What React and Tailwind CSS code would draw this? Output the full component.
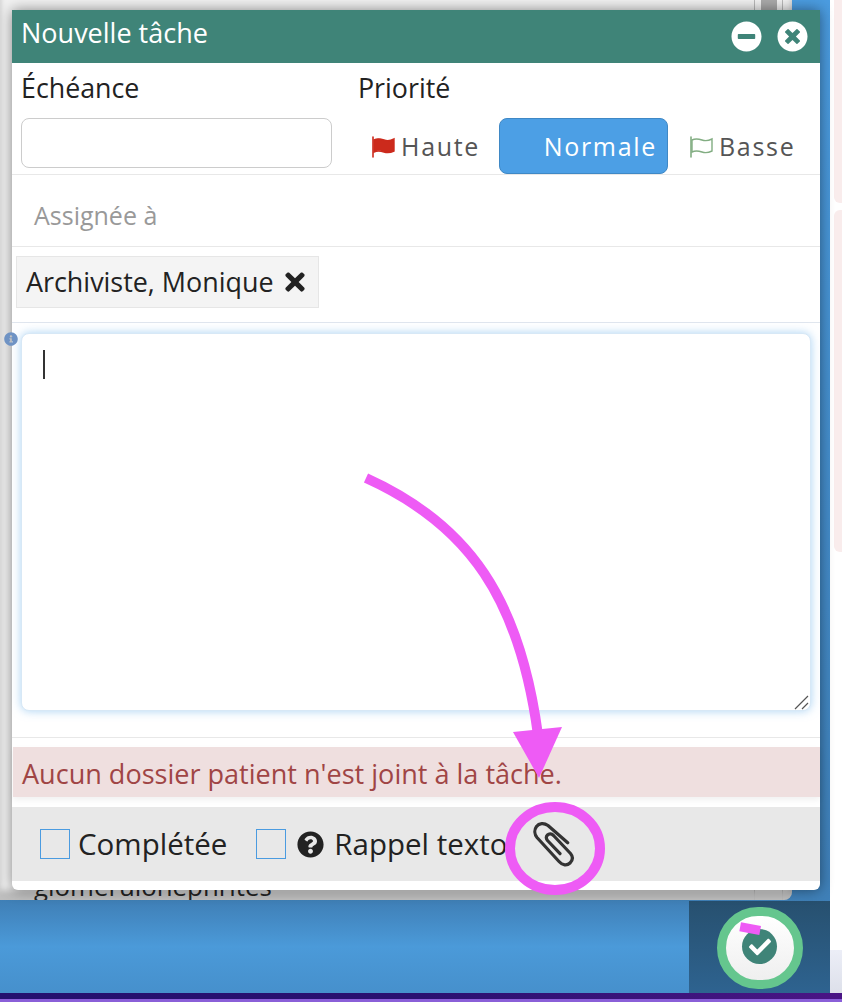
import { FaMinusCircle, FaTimesCircle, FaTimes, FaQuestionCircle, FaInfoCircle, FaCheck } from 'react-icons/fa';

function Flag({ pole, fill, stroke }) {
  return (
    <svg width="26" height="22" viewBox="0 0 26 22" className="shrink-0">
      <path d="M2 1v20" stroke={pole} strokeWidth="1.6" strokeLinecap="round" />
      <path
        d="M3 4c4-2 7-1 10 0s6 1 10-1v12c-4 2-7 2-10 1s-6-2-10 0z"
        fill={fill}
        stroke={stroke}
        strokeWidth="1.4"
      />
    </svg>
  );
}

function Paperclip() {
  return (
    <svg width="44" height="48" viewBox="533 823 44 48" fill="none" className="shrink-0">
      <path
        d="M568.7 845.7 L549 828.5 C545 825.5 540 826 537.5 829.5 C535 833 535.5 837.5 538 840.5 L560 864.5 C563.5 868.5 568 869 571 866 C574 863 574 859.5 571.5 856.5 L554.5 838.5 C552.5 836.5 550 836.5 548.5 838 C547 839.5 547 841.5 548.5 843.5 L561 856.7"
        stroke="#333"
        strokeWidth="3.2"
        strokeLinecap="round"
        strokeLinejoin="round"
      />
    </svg>
  );
}

function Checkbox() {
  return <span className="block w-[30px] h-[30px] border border-[#4a9be0] bg-[#e8e8e8] shrink-0" />;
}

export default function App() {
  return (
    <div className="relative w-[842px] h-[1002px] overflow-hidden bg-white font-['Open_Sans',sans-serif] text-[#222]">
      <div className="flex h-[993px]">
        <div className="w-[830px] flex flex-col">
          {/* page behind the dialog */}
          <div className="h-[900px] flex bg-gradient-to-b from-[#4b9ce0] to-[#3f80b8] overflow-hidden">
            <div className="w-[792px] flex rounded-br-lg bg-[#f2f2f2] shadow-[inset_0_-10px_6px_rgba(0,0,0,0.22)] overflow-hidden">
              <div className="flex-1 flex flex-col justify-end pl-[34px] overflow-hidden">
                <div className="text-[25.8px] leading-[34px] text-[#222] -mb-[3px]">glomérulonéphrites</div>
              </div>
              <div className="w-[29px] border-x border-[#b9b9b9] flex justify-center">
                <div className="w-[16px] h-[10px] bg-[#aaaaaa]" />
              </div>
              <div className="w-[9px]" />
            </div>
          </div>
          <div className="flex-1 flex bg-gradient-to-b from-[#3f7fb6] via-[#4b9ad9] to-[#4690cc]">
            <div className="flex-1" />
            <div className="w-[141px] mt-[1px] flex items-center justify-center bg-gradient-to-b from-[#27506f] to-[#2e6390]">
              <div className="w-[86px] h-[82px] mt-[2px] rounded-full border-[9px] border-[#65c68e] bg-gradient-to-b from-white to-[#efefef] flex items-center justify-center">
                <div className="w-[35px] h-[35px] -mt-[3px] rounded-full bg-[#3f8478] flex items-center justify-center">
                  <FaCheck className="text-white text-[22px]" />
                </div>
              </div>
            </div>
          </div>
        </div>
        <div className="flex-1 flex flex-col pl-[4px] gap-[7px]">
          <div className="h-[203px] bg-[#f9ecec] rounded-bl-md" />
          <div className="h-[342px] bg-[#f9ecec] rounded-l-md" />
          <div className="flex-1" />
          <div className="h-[43px] -ml-[4px] bg-gradient-to-b from-[#eceef7] to-[#dde0ea]" />
        </div>
      </div>
      <div className="h-[6px] bg-gradient-to-r from-[#24106e] via-[#2a1070] to-[#4a1585]" />
      <div className="h-[3px] bg-[#8a5fd8]" />

      {/* dialog */}
      <div className="absolute left-[12px] top-[10px] w-[808px] h-[880px] bg-white rounded-b-md shadow-[0_0_14px_rgba(0,0,0,0.45)] flex flex-col">
        <div className="h-[53px] shrink-0 bg-[#3f8478] flex items-center justify-between pl-[9px] pr-[12px] text-white">
          <span className="text-[27px] leading-none -mt-[9px]">Nouvelle tâche</span>
          <div className="flex gap-[15px]">
            <FaMinusCircle className="text-[31px]" />
            <FaTimesCircle className="text-[31px]" />
          </div>
        </div>

        <div className="h-[112px] shrink-0 border-b border-[#e8e8e8] flex pl-[9px]">
          <div className="w-[337px] shrink-0">
            <div className="text-[26.8px] leading-[34px] mt-[8px]">Échéance</div>
            <input className="block mt-[13px] w-[311px] h-[50px] rounded-lg border border-[#cccccc] bg-white" />
          </div>
          <div className="flex-1">
            <div className="text-[26.8px] leading-[34px] mt-[8px]">Priorité</div>
            <div className="flex items-stretch mt-[13px] h-[56px] text-[25px] tracking-[1.7px] text-[#555]">
              <div className="flex items-center pl-[13px] pt-[2px] w-[141px]">
                <Flag pole="#cc2a1c" fill="#cc2a1c" stroke="#cc2a1c" />
                <span className="ml-[4px]">Haute</span>
              </div>
              <div className="w-[169px] rounded-lg bg-[#4c9fe5] border border-[#3f88c5] text-white flex items-center justify-end pr-[10px] pt-[2px]">
                Normale
              </div>
              <div className="flex items-center pl-[21px] pt-[2px]">
                <Flag pole="#82ad82" fill="transparent" stroke="#82ad82" />
                <span className="ml-[4px]">Basse</span>
              </div>
            </div>
          </div>
        </div>

        <div className="h-[72px] shrink-0 border-b border-[#e8e8e8] flex items-center pl-[22px] pt-[10px] text-[25px] text-[#999]">
          Assignée à
        </div>

        <div className="h-[76px] shrink-0 border-b border-[#e0e6ee] pl-[4px] pt-[9px]">
          <div className="inline-flex items-center h-[52px] w-[303px] bg-[#f4f4f4] border border-[#e6e6e6] pl-[9px] text-[26.9px]">
            <span>Archiviste, Monique</span>
            <FaTimes className="ml-[7px] text-[28px] text-[#222]" />
          </div>
        </div>

        <div className="relative h-[415px] shrink-0 border-b border-[#e8e8e8] pl-[9px] pr-[9px] pt-[10px]">
          <textarea className="block w-full h-[378px] rounded-lg border border-[#d7e8f6] bg-white outline-none shadow-[0_0_10px_rgba(102,175,233,0.55)] resize-none" />
          <span className="absolute left-[31px] top-[27px] w-[2px] h-[29px] bg-[#333]" />
          <FaInfoCircle className="absolute -left-[8px] top-[9px] text-[14px] text-[#6f93c4]" />
          <svg className="absolute right-[10px] top-[372px]" width="16" height="15" viewBox="0 0 16 15" fill="none">
            <path d="M1 14 L14 1 M8 14 L14 8" stroke="#555" strokeWidth="1.2" />
          </svg>
        </div>

        <div className="mt-[9px] ml-[1px] h-[50px] shrink-0 bg-[#efdfdf] flex items-center pl-[9px] pt-[5px] text-[27.05px] text-[#a04545] shadow-[0_3px_6px_rgba(0,0,0,0.06)]">
          Aucun dossier patient n'est joint à la tâche.
        </div>

        <div className="mt-[10px] h-[74px] shrink-0 bg-[#e8e8e8] flex items-center pl-[28px] text-[29.5px] text-[#222] whitespace-nowrap">
          <Checkbox />
          <span className="ml-[8px]">Complétée</span>
          <span className="ml-[29px]"><Checkbox /></span>
          <FaQuestionCircle className="ml-[11px] text-[27px] text-[#222]" />
          <span className="ml-[10px]">Rappel texto</span>
          <span className="ml-[24px]"><Paperclip /></span>
        </div>
      </div>

      {/* annotation drawn on top */}
      <svg className="absolute left-0 top-0 pointer-events-none" width="842" height="1002" viewBox="0 0 842 1002" fill="none">
        <path d="M366 478 C470 525 520 600 538 735" stroke="#ee5bf5" strokeWidth="10" />
        <polygon points="513,732 562,727 539,778" fill="#ee5bf5" />
        <ellipse cx="555" cy="848.5" rx="45" ry="41.5" stroke="#ee5bf5" strokeWidth="10" />
        <polygon points="741,922.3 761,926 759.3,935 739.3,931.3" fill="#ee5bf5" />
      </svg>
    </div>
  );
}
